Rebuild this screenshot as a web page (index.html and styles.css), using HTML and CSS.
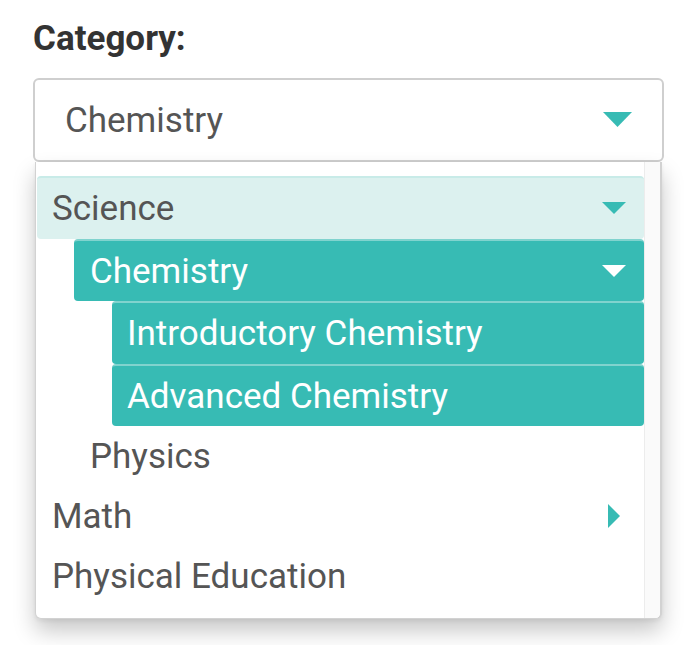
FILE: index.html
```html
<!DOCTYPE html>
<html lang="en">
<head>
<meta charset="utf-8">
<title>Category</title>
<link rel="stylesheet" href="styles.css">
</head>
<body>
<div class="field">
  <div class="label">Category:</div>
  <div class="select">
    <span class="select-text">Chemistry</span>
    <svg class="caret-lg" width="29" height="15" viewBox="0 0 29 15"><polygon points="0,0 29,0 14.5,15"/></svg>
  </div>
  <div class="panel">
    <div class="list">
      <div class="row lvl0 open">
        <span>Science</span>
        <span class="ico"><svg width="24" height="12" viewBox="0 0 24 12"><polygon points="0,0 24,0 12,12"/></svg></span>
      </div>
      <div class="row lvl1 selected">
        <span>Chemistry</span>
        <span class="ico"><svg width="24" height="12" viewBox="0 0 24 12"><polygon points="0,0 24,0 12,12"/></svg></span>
      </div>
      <div class="row lvl2 selected"><span>Introductory Chemistry</span></div>
      <div class="row lvl2 selected"><span>Advanced Chemistry</span></div>
      <div class="row lvl1 plain"><span>Physics</span></div>
      <div class="row lvl0 plain">
        <span>Math</span>
        <span class="ico"><svg width="12" height="24" viewBox="0 0 12 24"><polygon points="0,0 12,12 0,24"/></svg></span>
      </div>
      <div class="row lvl0 plain"><span>Physical Education</span></div>
    </div>
    <div class="track"></div>
  </div>
</div>
</body>
</html>
```
FILE: styles.css
```css
html, body {
  margin: 0;
  padding: 0;
  background: #ffffff;
}

body {
  font-family: Roboto, "Liberation Sans", Arial, sans-serif;
  min-height: 645px;
}

.field {
  width: 631px;
  margin-left: 33px;
  padding-bottom: 27px;
}

.label {
  padding-top: 19px;
  font-size: 35px;
  line-height: 40px;
  font-weight: 700;
  color: #333333;
}

.select {
  margin-top: 19px;
  box-sizing: border-box;
  height: 84px;
  border: 2px solid #cfcfcf;
  border-radius: 6px;
  padding: 0 30px 0 30px;
  display: flex;
  align-items: center;
  justify-content: space-between;
  background: #ffffff;
}

.select-text {
  font-size: 35px;
  color: #555555;
  padding-top: 1px;
}

.caret-lg {
  fill: #37bbb4;
  display: block;
  margin-top: -2px;
}

.panel {
  margin: 0 2px;
  display: flex;
  border: 1px solid #d2d2d2;
  border-top: none;
  border-right-width: 2px;
  border-radius: 0 0 6px 6px;
  box-shadow: 0 12px 22px rgba(0, 0, 0, 0.22), 0 2px 4px rgba(0, 0, 0, 0.06);
  background: #ffffff;
  overflow: hidden;
}

.list {
  flex: 1;
  padding: 14px 0 12px 1px;
}

.track {
  width: 15px;
  background: #fafafa;
  border-left: 1px solid #ececec;
}

.row {
  display: flex;
  align-items: center;
  justify-content: space-between;
  font-size: 35px;
  color: #555555;
  padding-right: 18px;
  padding-left: 15px;
  border-radius: 4px;
}

.row > span:first-child {
  padding-top: 1px;
}

.row.plain {
  height: 60px;
}

.row.open,
.row.selected {
  height: 60.5px;
  border-top: 2px solid transparent;
}

.row.open {
  background: #dcf1ef;
  border-top-color: #c8ebe8;
}

.row.selected {
  background: #37bbb4;
  border-top-color: #80d3ce;
  color: #ffffff;
}

.lvl1 {
  margin-left: 37px;
  padding-left: 16px;
}

.lvl2 {
  margin-left: 75px;
}

.ico {
  width: 24px;
  display: flex;
  justify-content: center;
  align-items: center;
}

.ico svg {
  display: block;
  fill: #37bbb4;
}

.row.selected .ico svg {
  fill: #ffffff;
}
```
